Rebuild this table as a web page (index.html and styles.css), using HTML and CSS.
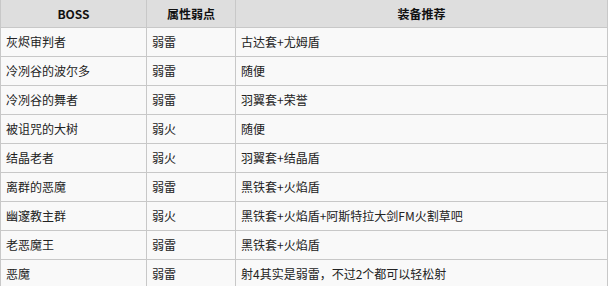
FILE: index.html
```html
<!DOCTYPE html>
<html lang="zh">
<head>
<meta charset="utf-8">
<link rel="stylesheet" href="styles.css">
</head>
<body>
<table class="boss-table">
  <colgroup>
    <col class="c1">
    <col class="c2">
    <col class="c3">
  </colgroup>
  <thead>
    <tr><th>BOSS</th><th>属性弱点</th><th>装备推荐</th></tr>
  </thead>
  <tbody>
    <tr><td>灰烬审判者</td><td>弱雷</td><td>古达套+尤姆盾</td></tr>
    <tr><td>冷冽谷的波尔多</td><td>弱雷</td><td>随便</td></tr>
    <tr><td>冷冽谷的舞者</td><td>弱雷</td><td>羽翼套+荣誉</td></tr>
    <tr><td>被诅咒的大树</td><td>弱火</td><td>随便</td></tr>
    <tr><td>结晶老者</td><td>弱火</td><td>羽翼套+结晶盾</td></tr>
    <tr><td>离群的恶魔</td><td>弱雷</td><td>黑铁套+火焰盾</td></tr>
    <tr><td>幽邃教主群</td><td>弱火</td><td>黑铁套+火焰盾+阿斯特拉大剑FM火割草吧</td></tr>
    <tr><td>老恶魔王</td><td>弱雷</td><td>黑铁套+火焰盾</td></tr>
    <tr><td>恶魔</td><td>弱雷</td><td>射4其实是弱雷，不过2个都可以轻松射</td></tr>
  </tbody>
</table>
</body>
</html>
```
FILE: styles.css
```css
html, body {
  margin: 0;
  padding: 0;
  background: #ffffff;
}
.boss-table {
  border-collapse: collapse;
  table-layout: fixed;
  width: 607px;
  margin-top: -1px;
  font-family: "Microsoft YaHei", "Noto Sans CJK SC", "Noto Sans", sans-serif;
  font-size: 12px;
  color: #222222;
}
.c1 { width: 146px; }
.c2 { width: 89px; }
.c3 { width: 372px; }
.boss-table th,
.boss-table td {
  border: 1px solid #c8c8c8;
  padding: 0 5px;
  line-height: 16px;
  white-space: nowrap;
  overflow: hidden;
}
.boss-table th {
  background: #dedede;
  height: 27px;
  font-weight: bold;
  text-align: center;
  color: #111111;
}
.boss-table td {
  background: #f9f9f9;
  height: 28px;
  text-align: left;
}
```
